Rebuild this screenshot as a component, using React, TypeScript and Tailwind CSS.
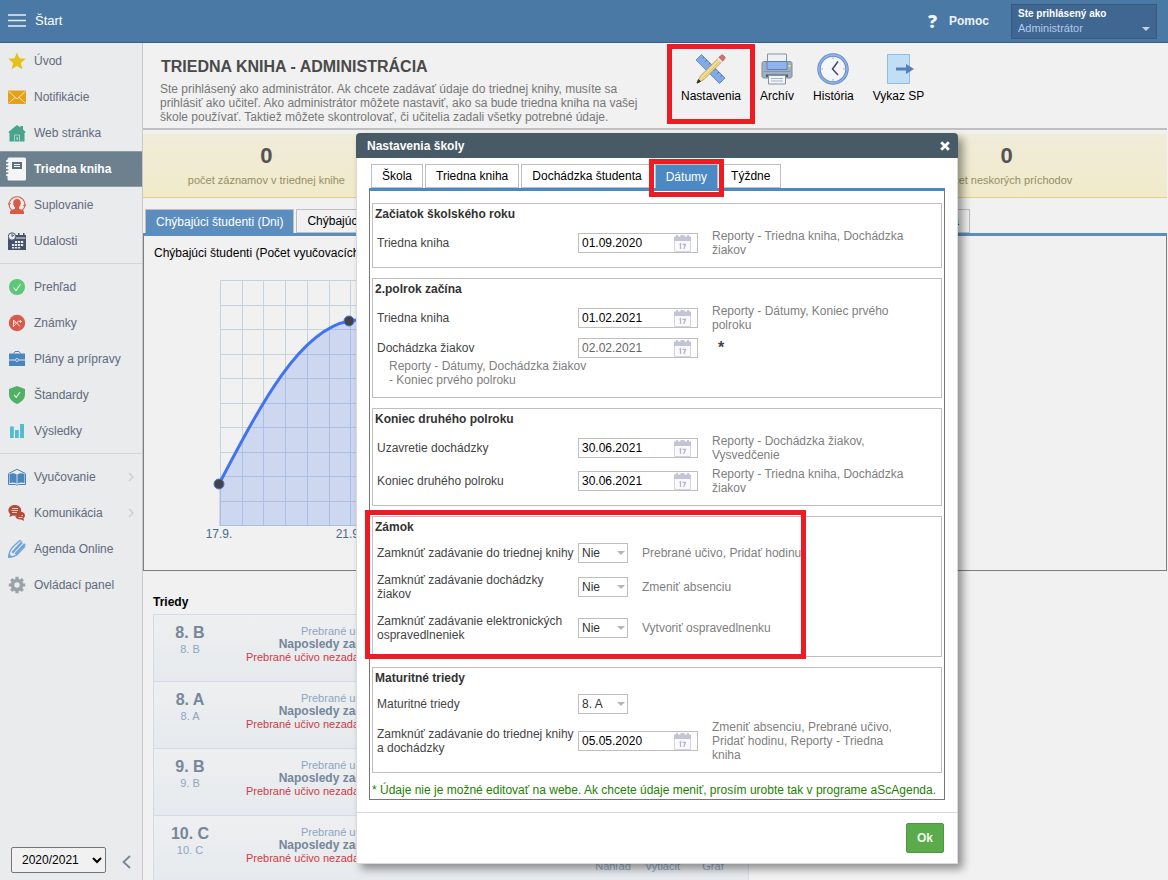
import { useId, type ReactNode } from 'react';

const mainMenu = [
  { label: 'Úvod', icon: <StarIcon /> },
  { label: 'Notifikácie', icon: <MailIcon /> },
  { label: 'Web stránka', icon: <HouseIcon /> },
  { label: 'Triedna kniha', icon: <NotebookIcon />, active: true },
  { label: 'Suplovanie', icon: <PersonIcon /> },
  { label: 'Udalosti', icon: <EventsIcon /> },
];

const gradesMenu = [
  { label: 'Prehľad', icon: <OverviewIcon /> },
  { label: 'Známky', icon: <GradesIcon /> },
  { label: 'Plány a prípravy', icon: <BriefcaseIcon /> },
  { label: 'Štandardy', icon: <ShieldIcon /> },
  { label: 'Výsledky', icon: <BarsIcon /> },
];

const toolsMenu = [
  { label: 'Vyučovanie', icon: <BookIcon />, more: true },
  { label: 'Komunikácia', icon: <ChatIcon />, more: true },
  { label: 'Agenda Online', icon: <PencilIcon /> },
  { label: 'Ovládací panel', icon: <GearIcon /> },
];

const classes = ['8. B', '8. A', '9. B', '10. C'];

type MenuEntry = { label: string; icon: ReactNode; active?: boolean; more?: boolean };

/* ---------- sidebar icons ---------- */

function Svg({ children }: { children: ReactNode }) {
  return (
    <svg width="18" height="18" viewBox="0 0 18 18" fill="none" aria-hidden="true" className="shrink-0">
      {children}
    </svg>
  );
}

function StarIcon() {
  return (
    <Svg>
      <path d="M9 .5l2.400 5.700 6.300.5-4.800 4.200 1.500 6.300L9 13.900l-5.400 3.300 1.500-6.300L.3 6.700l6.300-.5z" fill="#e6c01c" />
    </Svg>
  );
}

function MailIcon() {
  return (
    <Svg>
      <rect x="0" y="2.5" width="18" height="13.5" fill="#e5a118" />
      <path d="M.5 3.200L9 11l8.500-7.800M.5 15.400l6.500-6M17.500 15.400l-6.500-6" stroke="#f6e3b8" strokeWidth="1" />
    </Svg>
  );
}

function HouseIcon() {
  return (
    <Svg>
      <path d="M9 1l3.300 2.400V2H15v3.400L17.700 8l-.9 1H16.500v8.500h-15V9H1L.4 8z" fill="#48a58c" />
      <path d="M6.500 17.500V11h5v6.500" stroke="#a6d5c8" strokeWidth="1" />
      <path d="M8.500 13h1.500v3H8.500z" fill="#a6d5c8" />
    </Svg>
  );
}

function NotebookIcon() {
  return (
    <svg width="20" height="24" viewBox="0 0 20 24" aria-hidden="true" className="-ml-0.5 shrink-0">
      <rect x="1.500" y=".5" width="18.500" height="23" rx="1.500" fill="#f4f5f6" />
      <path d="M0 4h3M0 7.500h3M0 11h3M0 14.500h3M0 18h3" stroke="#fff" strokeWidth="1.500" />
      <path d="M1 5.700h1.500M1 9.200h1.500M1 12.700h1.500M1 16.200h1.500" stroke="#6e818d" strokeWidth="1" />
      <rect x="6" y="5" width="10" height="7" fill="#5c6f7b" />
      <path d="M8 7.500h6M8 9.500h6" stroke="#f4f5f6" />
    </svg>
  );
}

function PersonIcon() {
  return (
    <Svg>
      <path d="M9 3c2.500 0 3.800 1.700 3.800 4 0 1.700-.7 3.300-1.800 4.200v1.600l4 1.500c.6.300 1 .9 1 1.700v2H2v-2c0-.8.400-1.400 1-1.700l4-1.500v-1.600C5.900 10.300 5.200 8.700 5.200 7c0-2.300 1.300-4 3.800-4z" fill="#d95b46" />
      <path d="M4 14.500A8 8 0 0 1 1 8.500C1 4.300 4.600.7 9 .7s8 3.600 8 7.800a8 8 0 0 1-3 6" stroke="#d95b46" strokeWidth="1.100" />
      <path d="M0 6.500l1 2.500 2-2M18 10.500l-1-2.500-2 2" stroke="#d95b46" strokeWidth=".8" />
    </Svg>
  );
}

function EventsIcon() {
  return (
    <Svg>
      <path d="M0 4h18v14H0z" fill="#46536a" />
      <path d="M10 1h1.500v2H15V1h1.500v2H18v3H8V3h2z" fill="#46536a" />
      <path d="M8 6h9.500" stroke="#e9ebec" />
      <circle cx="4" cy="4.500" r="3.700" fill="#e9ebec" stroke="#46536a" />
      <path d="M4 2v2.500L6 3" stroke="#46536a" />
      <path d="M7 9h2.200v2H7zM10 9h2.200v2H10zM13 9h2.200v2H13zM4 12h2.200v2H4zM7 12h2.200v2H7zM10 12h2.200v2H10zM13 12h2.200v2H13zM4 15h2.200v1.500H4zM7 15h2.200v1.500H7zM10 15h2.200v1.500H10z" fill="#e9ebec" />
    </Svg>
  );
}

function OverviewIcon() {
  return (
    <Svg>
      <circle cx="9" cy="9" r="8" fill="#5cc878" />
      <path d="M5.500 9.500l2.500 3 4.500-6.500" stroke="#e4f7e9" strokeWidth="1.100" />
    </Svg>
  );
}

function GradesIcon() {
  return (
    <Svg>
      <circle cx="9" cy="9" r="8.200" fill="#d9594a" />
      <path d="M5.500 13V6l6.500 6.500M5.500 12.500l5.500-6M5.500 9.500L8 8M11 7.500h3M12.500 6v3" stroke="#f7dcd8" strokeWidth="1" />
    </Svg>
  );
}

function BriefcaseIcon() {
  return (
    <Svg>
      <path d="M5.500 3.500l1.500-2h4l1.500 2" stroke="#4a86bd" />
      <path d="M1 3.500h16v12.500H1z" fill="#4a86bd" />
      <path d="M1 10h6.500M10.500 10H17" stroke="#d8e5f0" />
      <circle cx="9" cy="10" r="1.500" fill="#4a86bd" stroke="#d8e5f0" strokeWidth=".8" />
    </Svg>
  );
}

function ShieldIcon() {
  return (
    <Svg>
      <path d="M9 0l8 3v5.500c0 4.200-3.500 7.700-8 9.500-4.500-1.800-8-5.300-8-9.500V3z" fill="#50b063" />
      <path d="M6 9l2.300 2.300L12 6" stroke="#e0f3e4" strokeWidth="1.100" />
    </Svg>
  );
}

function BarsIcon() {
  return (
    <Svg>
      <path d="M2 4.500h3.800V16H2zM7 8h3.800v8H7zM12 2h4v14h-4z" fill="#52bcd2" />
    </Svg>
  );
}

function BookIcon() {
  return (
    <Svg>
      <path d="M.5 5.500L9 1.300l8.500 4.200" stroke="#4a86bd" />
      <path d="M1.500 6C4 5 6.500 5.200 8.600 6.400v9C6.500 14.300 4 14.200 1.500 15zM16.500 6c-2.500-1-5-.8-7.100.4v9c2.100-1.100 4.600-1.200 7.100-.4z" fill="#4a86bd" />
      <path d="M.5 6v10.500h7c.6.700 2.400.7 3 0h7V6" stroke="#4a86bd" />
    </Svg>
  );
}

function ChatIcon() {
  return (
    <Svg>
      <path d="M12.500 7.500c2.500.2 4.500 1.800 4.500 3.900 0 1.200-.6 2.200-1.600 2.900l.8 2.700-3-1.500c-3 .2-5.200-1.100-5.900-3" fill="#b54a3a" />
      <path d="M6.800 1c3.600 0 6.400 2.300 6.400 5.300s-2.800 5.400-6.400 5.400c-.7 0-1.400-.1-2-.3L1.500 13l.7-3C1 9 .4 7.800.4 6.300.4 3.300 3.200 1 6.800 1z" fill="#b54a3a" />
      <path d="M4 4.500h6M3.500 6.500h6.500M4 8.500h5M10.500 13.500h4M13.500 11.500H15" stroke="#f0d8d4" strokeWidth=".9" />
    </Svg>
  );
}

function PencilIcon() {
  return (
    <Svg>
      <path d="M.6 17.400C1 13.300 2 10 4.500 7.300L11 1.200c.8-.7 1.900-.5 2.500.2" stroke="#6fa3dc" strokeWidth="1.300" />
      <path d="M.6 17.400c4.200-.4 7.300-1.500 9.900-4.200l6.500-7" stroke="#6fa3dc" strokeWidth="1.300" />
      <path d="M4.300 12.700L14 2.300M7.500 14L17 4" stroke="#6fa3dc" strokeWidth="2.400" />
      <path d="M0 18l1-4.500 3.500 3.600z" fill="#6fa3dc" />
    </Svg>
  );
}

function GearIcon() {
  return (
    <Svg>
      <circle cx="9" cy="9" r="4.500" stroke="#96a4a6" strokeWidth="3.600" />
      <path d="M9 .8v3M9 14.200v3M.8 9h3M14.200 9h3M3.200 3.200l2.200 2.200M12.600 12.600l2.200 2.200M3.200 14.800l2.200-2.200M12.600 5.400l2.200-2.200" stroke="#96a4a6" strokeWidth="3.200" />
    </Svg>
  );
}

/* ---------- toolbar icons ---------- */

function SettingsIcon() {
  return (
    <svg width="32" height="32" viewBox="0 0 32 32" fill="none" aria-hidden="true">
      <path d="M6.500 1.500L30 25l-5.500 5.500L1 7z" fill="#82abe6" stroke="#6a90c8" />
      <path d="M9 4L7.500 5.500M12 7l-2 2M15 10l-1.500 1.500M21 16l-1.500 1.500M24 19l-2 2M27 22l-1.500 1.500" stroke="#4a6ca3" strokeWidth=".8" />
      <path d="M25 3.500L28.500 7 9 26.500 2 30l3.500-7z" fill="#f2dd8c" stroke="#a08c58" strokeWidth=".8" strokeLinejoin="round" />
      <path d="M26 7L7.500 25.500" stroke="#dcc46c" />
      <path d="M24 4.500l1.800-2c.8-.8 1.900-.8 2.700 0l1 1c.8.800.8 1.900 0 2.700l-2 1.800z" fill="#dd6e70" stroke="#b05c60" strokeWidth=".8" />
      <path d="M22.800 5.200l4 4" stroke="#e7e9ee" strokeWidth="1.800" />
      <path d="M3.500 26.500L2 30l3.500-1.500z" fill="#333" stroke="#333" />
    </svg>
  );
}

function PrinterIcon() {
  return (
    <svg width="32" height="32" viewBox="0 0 32 32" fill="none" aria-hidden="true">
      <path d="M6.500 1h19v8h-19z" fill="#eef2f6" stroke="#8493a6" />
      <path d="M3 8.500h26c1.200 0 2 .8 2 2v12.500c0 1-.8 2-2 2H3c-1.200 0-2-1-2-2V10.500c0-1.200.8-2 2-2z" fill="#9fb0c2" stroke="#7b8ca0" />
      <path d="M6 8.500h20v8H6z" fill="#8fb4ec" stroke="#5e80b6" />
      <path d="M3 18.500h26" stroke="#8294a8" />
      <path d="M5 21.500h22v2.500H5z" fill="#4d5b6b" />
      <path d="M7.500 22.500h17v8.500h-17z" fill="#f3f5f7" stroke="#8493a6" />
      <path d="M10 25.500h12M10 28h12" stroke="#a7b3c0" />
      <rect x="27.500" y="12" width="2" height="2" fill="#f0e072" />
    </svg>
  );
}

function ClockIcon() {
  return (
    <svg width="32" height="32" viewBox="0 0 32 32" fill="none" aria-hidden="true">
      <circle cx="16" cy="16" r="14" fill="#f4f6f9" stroke="#5d82bd" strokeWidth="3.400" />
      <circle cx="16" cy="16" r="14" stroke="#8db1ea" strokeWidth="1.800" />
      <path d="M21 8.500L15.500 16l5.500 6" stroke="#444c57" strokeWidth="1.500" />
      <path d="M16 4.500v1.500M16 26v1.500M4.500 16H6M26 16h1.500" stroke="#8c96a4" />
    </svg>
  );
}

function ExportIcon() {
  return (
    <svg width="32" height="32" viewBox="0 0 32 32" fill="none" aria-hidden="true">
      <path d="M4.500 1.500h22v29h-22z" fill="#c0def4" stroke="#8fbce0" />
      <path d="M13 14.500h10V11l8 5-8 5v-3.500H13z" fill="#587fb8" />
    </svg>
  );
}

function CalendarIcon() {
  return (
    <svg width="17" height="18" viewBox="0 0 17 18" fill="none" aria-hidden="true">
      <path d="M.5 4.500h16v13H.5z" fill="#fafafc" stroke="#d4d5e1" />
      <path d="M0 2.500h2V1h2v1.500h2.500V1h4v1.500H13V1h2v1.500h2V7H0z" fill="#c3c4d6" />
      <path d="M5.500 10.500l1-.7V15M8.500 10.300h3L9.700 15" stroke="#b4b5cb" strokeWidth="1.300" />
    </svg>
  );
}

/* ---------- shell ---------- */

function Menu({ items }: { items: MenuEntry[] }) {
  return (
    <ul>
      {items.map((item) => (
        <li key={item.label}>
          <a
            href="#"
            className={
              item.active
                ? 'flex h-9 items-center gap-2 border-y border-[#8f9da7] bg-[#6c808d] pl-2 pr-2 font-bold text-white'
                : 'flex h-9 items-center gap-2 pl-2 pr-2 text-[#5f6a7d]'
            }
          >
            {item.icon}
            <span className="grow whitespace-nowrap">{item.label}</span>
            {item.more && (
              <svg width="6" height="10" viewBox="0 0 6 10" fill="none" aria-hidden="true">
                <path d="M1 1l4 4-4 4" stroke="#c9cdd1" strokeWidth="1.200" />
              </svg>
            )}
          </a>
        </li>
      ))}
    </ul>
  );
}

function Divider() {
  return <div className="mt-1 mb-[5px] h-px bg-[#d2d5d7]" />;
}

function Sidebar() {
  return (
    <nav className="flex w-[143px] shrink-0 flex-col border-r border-[#c6c8ca] bg-[#e9ebec]">
      <Menu items={mainMenu} />
      <Divider />
      <Menu items={gradesMenu} />
      <Divider />
      <Menu items={toolsMenu} />
      <div className="mt-auto flex items-center gap-4 pb-[7px] pl-[11px]">
        <select aria-label="Školský rok" className="h-[26px] w-[95px] rounded-xs border border-[#767676] bg-[#f1f1f1] pl-1.5 text-black">
          <option>2020/2021</option>
        </select>
        <button type="button" aria-label="Zbaliť menu" className="pt-1">
          <svg width="9" height="14" viewBox="0 0 9 14" fill="none" aria-hidden="true">
            <path d="M8 1L1.500 7 8 13" stroke="#74879a" strokeWidth="1.800" />
          </svg>
        </button>
      </div>
    </nav>
  );
}

function TopBar() {
  return (
    <header className="flex h-[43px] shrink-0 items-center border-b border-[#36608c] bg-[#4a79a6] pl-2 pr-[11px] text-white">
      <button type="button" className="flex items-center gap-[9px] text-[13px]">
        <svg width="18" height="13" viewBox="0 0 18 13" aria-hidden="true">
          <path d="M0 1h18M0 6.500h18M0 12h18" stroke="#e8eff6" strokeWidth="1.600" />
        </svg>
        Štart
      </button>
      <a href="#" className="ml-auto flex items-center gap-3 font-bold text-[#eef3f8]">
        <span className="font-['Open_Sans',sans-serif] text-lg font-extrabold">?</span>
        Pomoc
      </a>
      <button type="button" className="ml-[22px] flex h-[35px] w-[146px] items-end justify-between border border-[#37597d] bg-[#406791] px-1.5 pb-[3px] text-left text-[11px] leading-[14px]">
        <span>
          <span className="block text-[10px] font-bold">Ste prihlásený ako</span>
          <span className="block text-[#b0cbee]">Administrátor</span>
        </span>
        <svg width="8" height="4" viewBox="0 0 8 4" aria-hidden="true" className="mb-1">
          <path d="M0 0h8L4 4z" fill="#c6d3e0" />
        </svg>
      </button>
    </header>
  );
}

function Tool({ label, icon, marked }: { label: string; icon: ReactNode; marked?: boolean }) {
  return (
    <button type="button" className="relative flex flex-col items-center gap-[3px] px-2 pt-2.5 text-black">
      {icon}
      {label}
      {marked && <span className="absolute -inset-x-1.5 top-px h-20 border-[5px] border-[#ed1c24]" />}
    </button>
  );
}

function PageHeader() {
  return (
    <div className="flex h-[87px] shrink-0 items-start border-b-2 border-[#bfbfbf] bg-[#f1f1f1] pl-[17px]">
      <div className="max-w-[495px] shrink pt-3">
        <h1 className="pl-px text-base font-bold leading-6 text-[#4a4a4a]">TRIEDNA KNIHA - ADMINISTRÁCIA</h1>
        <p className="pt-[3px] leading-[14px] text-[#777]">
          Ste prihlásený ako administrátor. Ak chcete zadávať údaje do triednej knihy, musíte sa prihlásiť ako učiteľ. Ako
          administrátor môžete nastaviť, ako sa bude triedna kniha na vašej škole používať. Taktiež môžete skontrolovať, či
          učitelia zadali všetky potrebné údaje.
        </p>
      </div>
      <div className="ml-[18px] flex gap-[3px]">
        <Tool label="Nastavenia" icon={<SettingsIcon />} marked />
        <Tool label="Archív" icon={<PrinterIcon />} />
        <Tool label="História" icon={<ClockIcon />} />
        <Tool label="Vykaz SP" icon={<ExportIcon />} />
      </div>
    </div>
  );
}

function Stat({ value, label, className = '' }: { value: string; label: string; className?: string }) {
  return (
    <div className={`text-center ${className}`}>
      <div className="text-[22px] font-bold leading-6 text-[#545454]">{value}</div>
      <div className="mt-[5px] text-[11px] leading-[14px] text-[#968e62]">{label}</div>
    </div>
  );
}

function AbsenceChart() {
  const cols = [0, 1, 2, 3, 4, 5, 6, 7, 8, 9, 10, 11, 12];
  const rows = [0, 1, 2, 3, 4, 5, 6, 7, 8, 9, 10];
  return (
    <svg width="300" height="270" viewBox="0 0 300 270" fill="none" aria-label="Chýbajúci študenti">
      {cols.map((c) => (
        <path key={c} d={`M${Math.round(c * 21.7) + 16.5} 5v246`} stroke="#c5d3df" />
      ))}
      {rows.map((r) => (
        <path key={r} d={`M16 ${Math.round(r * 24.5) + 5.5}h261`} stroke="#c5d3df" />
      ))}
      <path d="M15 209C58 127 96 55 145 46c50-8 90 20 132 60v145H15z" fill="#4273f0" fillOpacity=".2" />
      <path d="M15 209C58 127 96 55 145 46c50-8 90 20 132 60" stroke="#4273f0" strokeWidth="3" />
      <circle cx="15" cy="209" r="5" fill="#444" stroke="#4273f0" />
      <circle cx="145" cy="46" r="5" fill="#444" stroke="#4273f0" />
      <g fill="#4c6a8a" fontSize="12" textAnchor="middle">
        <text x="15" y="263">17.9.</text>
        <text x="145" y="263">21.9.</text>
      </g>
    </svg>
  );
}

function ClassRow({ name }: { name: string }) {
  return (
    <li className="flex h-[67px] border-b border-[#d3dce5] bg-linear-to-b from-[#eeeff0] to-[#e6eaee]">
      <div className="w-[72px] shrink-0 pt-2 text-center">
        <div className="text-base font-bold leading-5 text-[#76879b]">{name}</div>
        <div className="text-[11px] leading-3 text-[#8ea5c3]">{name}</div>
      </div>
      <div className="w-[224px] shrink-0 pt-2.5 text-center text-[11px] leading-[13px] text-[#8ea5c3]">
        <div>Prebrané učivo</div>
        <div className="text-xs font-bold leading-[13px] text-[#76879b]">Naposledy zadané: –</div>
        <div className="text-[#cf3a46]">Prebrané učivo nezadané od začiatku</div>
      </div>
      <div className="ml-auto grid grid-cols-3 items-end pr-2.5 pb-[9px] text-center text-[11px] leading-[14px] text-[#8ea5c3]">
        <a href="#" className="w-[50px]">Náhľad</a>
        <a href="#" className="w-[50px]">Vytlačiť</a>
        <a href="#" className="w-[50px]">Graf</a>
      </div>
    </li>
  );
}

/* ---------- settings dialog ---------- */

function Group({ title, marked, children }: { title: string; marked?: boolean; children: ReactNode }) {
  return (
    <section className="relative border border-[#bfbfbf] px-0.5 pt-[3px] pb-2.5">
      <h3 className="mb-2 font-bold leading-[14px] text-[#333]">{title}</h3>
      <div className="flex flex-col gap-[5px] px-0.5">{children}</div>
      {marked && <span className="absolute -top-[7px] -bottom-[3px] -left-2 w-[441px] border-[5px] border-[#ed1c24]" />}
    </section>
  );
}

function DateRow({ label, value, note, locked, hint }: { label: string; value: string; note?: string; locked?: boolean; hint?: string }) {
  const id = useId();
  return (
    <div>
      <div className="grid min-h-[22px] grid-cols-[201px_134px_1fr] items-center">
        <label htmlFor={id}>{label}</label>
        <span className="relative flex w-[120px] items-center">
          <input
            id={id}
            type="text"
            defaultValue={value}
            readOnly={locked}
            className={
              locked
                ? 'h-5 w-full border border-[#bfbfbf] bg-white pl-[3px] text-[#666]'
                : 'h-5 w-full border border-[#bfbfbf] bg-white pl-[3px] text-black'
            }
          />
          <button type="button" aria-label="Kalendár" className="absolute right-[7px]">
            <CalendarIcon />
          </button>
        </span>
        {note && <span className="max-w-[200px] text-[#808080]">{note}</span>}
        {locked && <span className="pl-1.5 text-base leading-5 font-bold">*</span>}
      </div>
      {hint && <p className="ml-3 max-w-[202px] text-[#808080]">{hint}</p>}
    </div>
  );
}

function SelectRow({ label, value, note, spaced }: { label: string; value: string; note?: string; spaced?: boolean }) {
  const id = useId();
  return (
    <div className={spaced ? 'grid grid-cols-[201px_64px_1fr] items-center py-1' : 'grid min-h-[22px] grid-cols-[201px_64px_1fr] items-center'}>
      <label htmlFor={id}>{label}</label>
      <span className="relative flex w-[50px] items-center">
        <select id={id} className="h-5 w-full appearance-none border border-[#bfbfbf] bg-white pl-[3px] text-[#333]">
          <option>{value}</option>
        </select>
        <svg width="8" height="4" viewBox="0 0 8 4" aria-hidden="true" className="pointer-events-none absolute right-[3px]">
          <path d="M0 0h8L4 4z" fill="#b5b5b5" />
        </svg>
      </span>
      <span className="text-[#808080]">{note}</span>
    </div>
  );
}

function Tab({ label, active, marked }: { label: string; active?: boolean; marked?: boolean }) {
  return (
    <button
      type="button"
      className={
        active
          ? 'relative z-10 h-6 border border-b-0 border-[#bfbfbf] bg-[#4b89c4] px-2.5 text-white'
          : 'relative h-6 border border-[#bfbfbf] px-2.5 text-black'
      }
    >
      {label}
      {marked && <span className="absolute -inset-x-[7px] -top-1.5 h-[38px] border-[5px] border-[#ed1c24]" />}
    </button>
  );
}

function SettingsDialog() {
  return (
    <div
      role="dialog"
      aria-label="Nastavenia školy"
      className="absolute top-[133px] left-[356px] w-[602px] rounded-t bg-white leading-[14px] text-[#444] shadow-[5px_5px_9px_rgba(0,0,0,0.4)]"
    >
      <div className="flex h-[25px] items-center justify-between rounded-t bg-[#485a65] pr-2 pl-[11px] text-white">
        <h2 className="font-bold">Nastavenia školy</h2>
        <button type="button" aria-label="Zavrieť">
          <svg width="10" height="10" viewBox="0 0 10 10" aria-hidden="true">
            <path d="M1.200 1.200l7.600 7.600M8.800 1.200L1.200 8.800" stroke="#fff" strokeWidth="2.800" />
          </svg>
        </button>
      </div>

      <div className="border border-t-0 border-[#d9d9d9]">
        <div className="px-3 pt-1.5 pb-3">
          <div className="flex gap-0.5 pl-0.5">
            <Tab label="Škola" />
            <Tab label="Triedna kniha" />
            <Tab label="Dochádzka študenta" />
            <Tab label="Dátumy" active marked />
            <Tab label="Týždne" />
          </div>
          <div className="border border-t-[3px] border-[#777] border-t-[#4b89c4] px-0.5 pt-3 pb-0.5">
            <div className="flex flex-col gap-2.5">
              <Group title="Začiatok školského roku">
                <DateRow label="Triedna kniha" value="01.09.2020" note="Reporty - Triedna kniha, Dochádzka žiakov" />
              </Group>
              <Group title="2.polrok začína">
                <DateRow label="Triedna kniha" value="01.02.2021" note="Reporty - Dátumy, Koniec prvého polroku" />
                <DateRow label="Dochádzka žiakov" value="02.02.2021" hint="Reporty - Dátumy, Dochádzka žiakov - Koniec prvého polroku" locked />
              </Group>
              <Group title="Koniec druhého polroku">
                <DateRow label="Uzavretie dochádzky" value="30.06.2021" note="Reporty - Dochádzka žiakov, Vysvedčenie" />
                <DateRow label="Koniec druhého polroku" value="30.06.2021" note="Reporty - Triedna kniha, Dochádzka žiakov" />
              </Group>
              <Group title="Zámok" marked>
                <SelectRow label="Zamknúť zadávanie do triednej knihy" value="Nie" note="Prebrané učivo, Pridať hodinu" />
                <SelectRow label="Zamknúť zadávanie dochádzky žiakov" value="Nie" note="Zmeniť absenciu" spaced />
                <SelectRow label="Zamknúť zadávanie elektronických ospravedlneniek" value="Nie" note="Vytvoriť ospravedlnenku" spaced />
              </Group>
              <Group title="Maturitné triedy">
                <SelectRow label="Maturitné triedy" value="8. A" />
                <DateRow
                  label="Zamknúť zadávanie do triednej knihy a dochádzky"
                  value="05.05.2020"
                  note="Zmeniť absenciu, Prebrané učivo, Pridať hodinu, Reporty - Triedna kniha"
                />
              </Group>
              <p className="whitespace-nowrap text-[#1e8200]">
                * Údaje nie je možné editovať na webe. Ak chcete údaje meniť, prosím urobte tak v programe aScAgenda.
              </p>
            </div>
          </div>
        </div>
        <div className="flex justify-end border-t border-[#d9d9d9] px-[13px] py-2.5">
          <button type="button" className="h-[30px] w-[38px] rounded-xs border border-[#4c9a3e] bg-[#5bab4d] font-bold text-[#f0f8ee]">
            Ok
          </button>
        </div>
      </div>
    </div>
  );
}

export default function App() {
  return (
    <div className="relative flex h-screen flex-col overflow-hidden bg-[#f1f1f1] font-['Liberation_Sans',Arial,sans-serif] text-xs">
      <TopBar />
      <div className="flex min-h-0 grow">
        <Sidebar />
        <main className="flex min-w-0 grow flex-col overflow-hidden pr-px">
          <PageHeader />
          <div className="mt-1 grid shrink-0 grid-cols-4 border-b border-[#e0cf8c] bg-linear-to-b from-[#efecd8] to-[#f1eacb] pt-2.5 pr-[37px] pb-2.5">
            <Stat value="0" label="počet záznamov v triednej knihe" />
            <Stat value="0" label="počet neskorých príchodov" className="col-start-4" />
          </div>

          <div className="mt-[11px] flex shrink-0 justify-between pr-[197px] pl-0.5">
            <div className="flex gap-0.5">
              <button type="button" className="h-6 border border-b-0 border-[#bfbfbf] bg-[#5b8ebf] px-2.5 text-white">
                Chýbajúci študenti (Dni)
              </button>
              <button type="button" className="h-6 border border-[#bfbfbf] px-2.5 text-black">
                Chýbajúci študenti
              </button>
            </div>
            <button type="button" className="h-6 border border-[#bfbfbf] px-2.5 text-black">
              Triedna kniha
            </button>
          </div>
          <section className="h-[338px] shrink-0 border border-t-[3px] border-[#7d7d7d] border-t-[#5b8ebf] pt-2 pl-2.5">
            <h2 className="leading-[18px] text-black">Chýbajúci študenti (Počet vyučovacích hodín)</h2>
            <div className="mt-[13px] pl-[50px]">
              <AbsenceChart />
            </div>
          </section>

          <section className="mt-[22px] w-[606px] shrink-0 pl-2.5">
            <h2 className="mb-[3px] font-bold leading-[18px] text-black">Triedy</h2>
            <ul className="border border-[#d3dce5]">
              {classes.map((name) => (
                <ClassRow key={name} name={name} />
              ))}
            </ul>
          </section>
        </main>
      </div>
      <SettingsDialog />
    </div>
  );
}
